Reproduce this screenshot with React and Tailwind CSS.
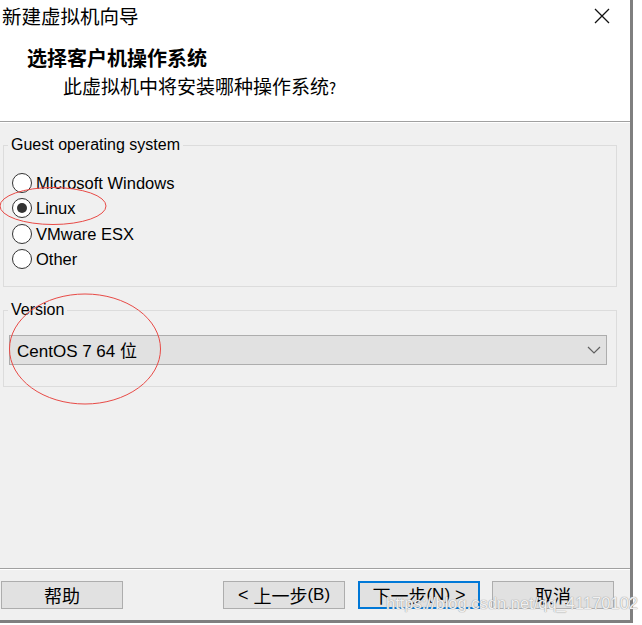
import React from "react";

const cjk = { fontFamily: '"Noto Sans CJK SC", "Noto Sans", sans-serif' };
const latin = { fontFamily: '"Liberation Sans", "Noto Sans CJK SC", sans-serif' };

const systems = ["Microsoft Windows", "Linux", "VMware ESX", "Other"];

function Radio({ label, checked }) {
  return (
    <div className="flex items-center h-[25.5px] pl-[8px]">
      <span className="w-[20px] h-[20px] rounded-full border-[1.5px] border-[#333333] bg-white flex items-center justify-center shrink-0">
        {checked && <span className="w-[10px] h-[10px] rounded-full bg-[#333333]" />}
      </span>
      <span className="ml-[4px] text-[16.5px] text-black leading-none">{label}</span>
    </div>
  );
}

function Button({ children, primary, className = "" }) {
  return (
    <button
      className={
        "h-[28px] w-[122px] flex items-center justify-center bg-[#e1e1e1] text-black text-[18px] " +
        (primary ? "border-2 border-[#0078d7] " : "border border-[#adadad] ") +
        className
      }
      style={cjk}
    >
      {children}
    </button>
  );
}

export default function App() {
  return (
    <div className="relative w-[642px] h-[625px] bg-white overflow-hidden" style={latin}>
      <div className="w-[633px] h-[623px] border-r-[3px] border-b-[3px] border-[#7f7f7f] flex flex-col bg-[#f0f0f0]">
        {/* Header */}
        <div className="h-[121px] bg-white flex flex-col shrink-0">
          <div className="h-[31px] flex items-center justify-between pl-[2px] pr-[20px]">
            <span className="text-[19.5px] text-black leading-none" style={cjk}>
              新建虚拟机向导
            </span>
            <svg width="16" height="16" viewBox="0 0 16 16" className="mt-[1px]">
              <path d="M1 1 L15 15 M15 1 L1 15" stroke="#111" strokeWidth="1.3" fill="none" />
            </svg>
          </div>
          <div className="mt-[14px] h-[26px] flex items-center pl-[27px]">
            <span className="text-[20px] font-bold text-black leading-none" style={cjk}>
              选择客户机操作系统
            </span>
          </div>
          <div className="mt-[1px] h-[26px] flex items-center pl-[63px]">
            <span className="text-[19px] text-black leading-none" style={cjk}>
              此虚拟机中将安装哪种操作系统<span className="text-[15px]">?</span>
            </span>
          </div>
        </div>
        <div className="h-[2px] border-t border-[#a0a0a0] border-b border-b-white shrink-0" />

        {/* Body */}
        <div className="flex-1 flex flex-col">
          <fieldset className="mt-[12px] ml-[3px] w-[614px] border border-[#dcdcdc] pt-[15px] pb-[14px]">
            <legend className="ml-[4px] px-[3px] text-[16px] leading-[20px] text-black">
              Guest operating system
            </legend>
            {systems.map((s) => (
              <Radio key={s} label={s} checked={s === "Linux"} />
            ))}
          </fieldset>

          <fieldset className="mt-[13px] ml-[3px] w-[614px] border border-[#dcdcdc] pt-[15px] pb-[21px]">
            <legend className="ml-[4px] px-[3px] text-[16px] leading-[20px] text-black">
              Version
            </legend>
            <div className="ml-[5px] mr-[9px] h-[30px] bg-[#e1e1e1] border border-[#adadad] flex items-center justify-between pl-[7px] pr-[5px]">
              <span className="text-[17px] text-black leading-none">
                CentOS 7 64 <span style={cjk}>位</span>
              </span>
              <svg width="14" height="8" viewBox="0 0 14 8">
                <path d="M1 1 L7 7 L13 1" stroke="#606060" strokeWidth="1.2" fill="none" />
              </svg>
            </div>
          </fieldset>

          <div className="flex-1" />
          <div className="h-[2px] border-t border-[#a0a0a0] border-b border-b-white" />
          <div className="h-[50px] flex items-start pt-[11px] pl-[1px]">
            <Button>帮助</Button>
            <Button className="ml-[100px]">
              <span style={latin} className="mr-[5px]">&lt;</span>上一步<span style={latin} className="text-[17px]">(B)</span>
            </Button>
            <Button primary className="ml-[13px]">
              下一步<span style={latin} className="text-[17px]">(N)</span><span style={latin} className="ml-[5px]">&gt;</span>
            </Button>
            <Button className="ml-[12px]">取消</Button>
          </div>
        </div>
      </div>

      {/* annotation overlays */}
      <svg className="absolute left-0 top-0 pointer-events-none" width="642" height="625">
        <ellipse cx="53" cy="206" rx="53" ry="18.5" stroke="#e84a46" strokeWidth="1" fill="none" />
        <ellipse cx="85" cy="349" rx="75.5" ry="55" stroke="#e84a46" strokeWidth="1" fill="none" />
      </svg>
      <span
        className="absolute left-[386px] top-[595px] text-[16.5px] text-white/85 leading-none whitespace-nowrap"
        style={{ ...latin, textShadow: "0 0 1px #9a9a9a, 0 0 1px #9a9a9a" }}
      >
        https://blog.csdn.net/qq_41170102
      </span>
    </div>
  );
}
